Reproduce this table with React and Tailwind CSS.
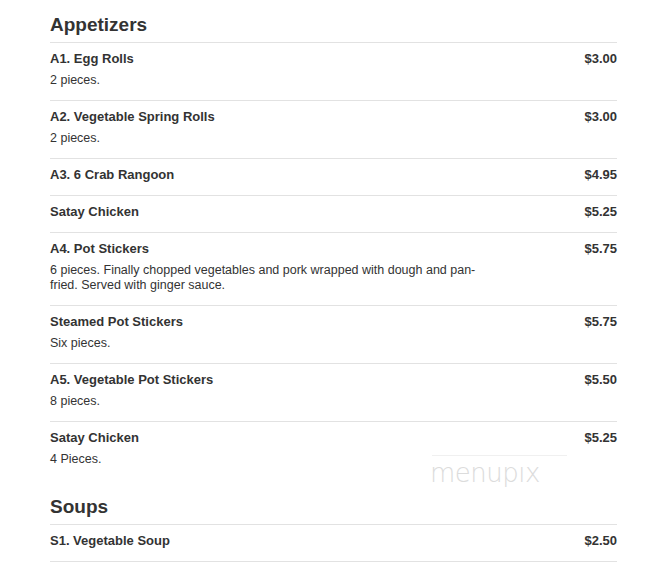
import React from "react";

const sections = [
  {
    title: "Appetizers",
    items: [
      { name: "A1. Egg Rolls", desc: "2 pieces.", price: "$3.00" },
      { name: "A2. Vegetable Spring Rolls", desc: "2 pieces.", price: "$3.00" },
      { name: "A3. 6 Crab Rangoon", price: "$4.95" },
      { name: "Satay Chicken", price: "$5.25" },
      {
        name: "A4. Pot Stickers",
        desc: "6 pieces. Finally chopped vegetables and pork wrapped with dough and pan-fried. Served with ginger sauce.",
        price: "$5.75",
      },
      { name: "Steamed Pot Stickers", desc: "Six pieces.", price: "$5.75" },
      { name: "A5. Vegetable Pot Stickers", desc: "8 pieces.", price: "$5.50" },
      { name: "Satay Chicken", desc: "4 Pieces.", price: "$5.25" },
    ],
  },
  {
    title: "Soups",
    more: true,
    items: [{ name: "S1. Vegetable Soup", price: "$2.50" }],
  },
];

const MenuItem = ({ item }) => (
  <div className="flex justify-between pt-[8px] pb-[12px]">
    <div>
      <div className="text-[13px] leading-[16px] font-bold">{item.name}</div>
      {item.desc && (
        <div className="mt-[6px] max-w-[445px] text-[12.5px] leading-[15px]">{item.desc}</div>
      )}
    </div>
    <div className="text-[13px] leading-[16px] font-bold">{item.price}</div>
  </div>
);

export default function App() {
  return (
    <div
      className="relative h-[564px] overflow-hidden bg-white text-[#333]"
      style={{ fontFamily: '"Liberation Sans", Arial, sans-serif' }}
    >
      <div className="ml-[50px] w-[567px]">
        {sections.map((section, i) => (
          <div key={section.title} className={i > 0 ? "mt-[3px]" : ""}>
            <h2 className="border-b border-[#e2e2e2] pt-[13px] pb-[5px] text-[19px] leading-[24px] font-bold">
              {section.title}
            </h2>
            <div
              className={
                section.more
                  ? "divide-y divide-[#e2e2e2] border-b border-[#e2e2e2]"
                  : "divide-y divide-[#e2e2e2]"
              }
            >
              {section.items.map((item, j) => (
                <MenuItem key={j} item={item} />
              ))}
            </div>
          </div>
        ))}
      </div>

      {/* watermark */}
      <div className="pointer-events-none absolute left-[430px] top-[455px] flex flex-col items-start">
        <div className="ml-[2px] h-px w-[135px] bg-[#f0f0f0]" />
        <div
          className="mt-[2px] text-[26px] leading-[30px] font-extralight tracking-[-0.5px] text-[#dcdcdc]"
          style={{ fontFamily: '"DejaVu Sans", sans-serif' }}
        >
          menupıx
        </div>
      </div>
    </div>
  );
}
